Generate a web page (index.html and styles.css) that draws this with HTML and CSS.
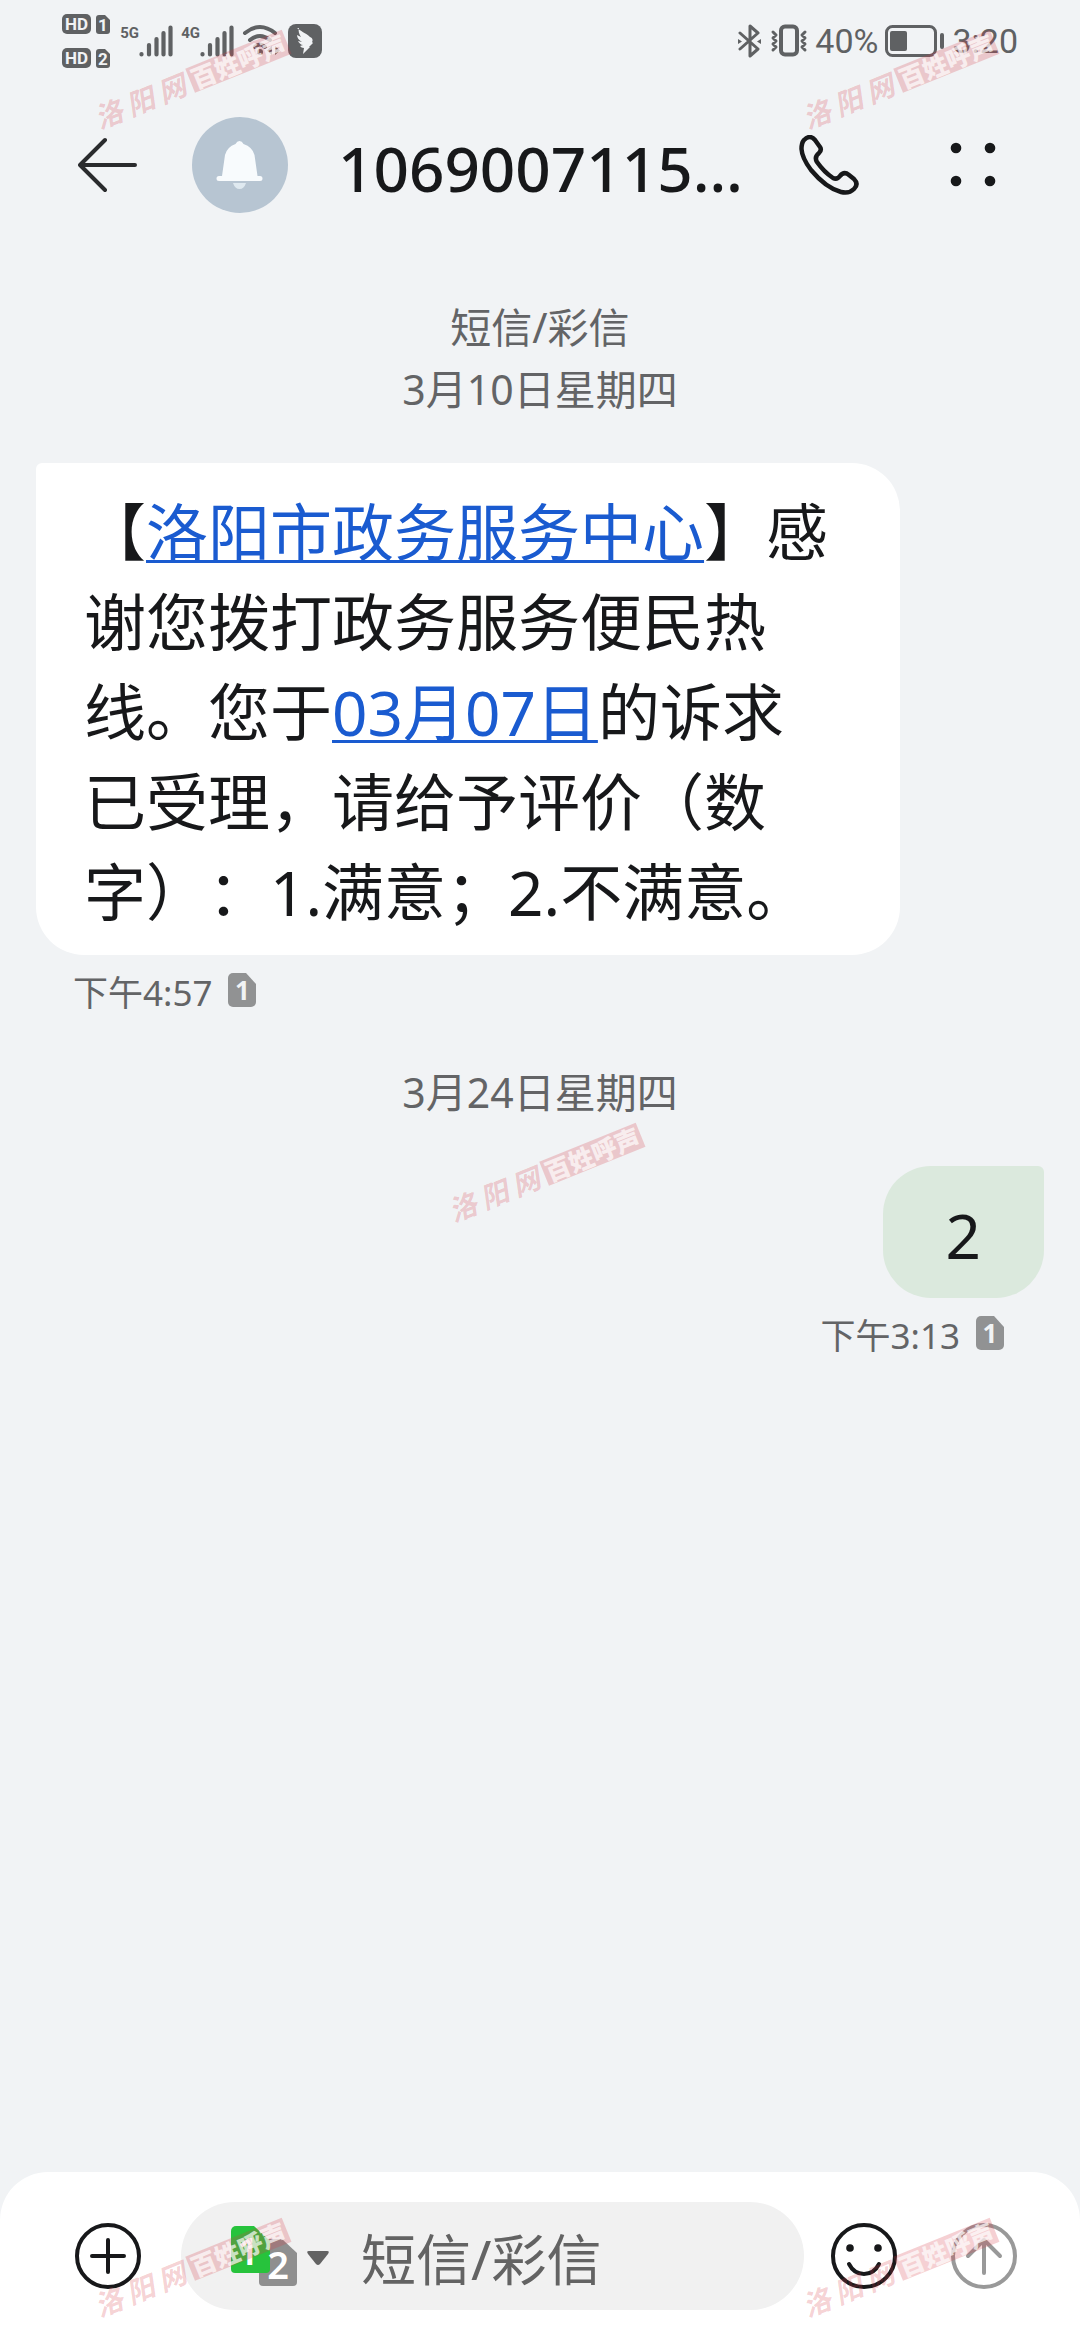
FILE: index.html
```html
<!DOCTYPE html>
<html lang="zh-CN">
<head>
<meta charset="utf-8">
<meta name="viewport" content="width=device-width, initial-scale=1">
<title>短信/彩信</title>
<link rel="stylesheet" href="styles.css">
</head>
<body>
<svg class="defs" aria-hidden="true">
  <symbol id="sim" viewBox="0 0 28 34">
    <path d="M5 0H18L28 11V29a5 5 0 0 1-5 5H5a5 5 0 0 1-5-5V5a5 5 0 0 1 5-5z"/>
  </symbol>
  <symbol id="bars" viewBox="0 0 34 32">
    <path d="M2.500 29v.5M10 20v9.500M17.500 14v15.500M24.500 8v21.500M31.500 2.500v27" fill="none" stroke="currentColor" stroke-width="4.200" stroke-linecap="round"/>
  </symbol>
</svg>

<div class="screen">
  <div class="status">
    <div class="status-left">
      <svg class="hd" viewBox="0 0 50 56" role="img" aria-label="HD 1 HD 2">
        <g fill="#5f6163">
          <rect x="0" y="1" width="29" height="20" rx="5"/>
          <rect x="0" y="35" width="29" height="20" rx="5"/>
          <path d="M37 2h6l5 5v11a3 3 0 0 1-3 3h-8a3 3 0 0 1-3-3V5a3 3 0 0 1 3-3z"/>
          <path d="M37 36h6l5 5v11a3 3 0 0 1-3 3h-8a3 3 0 0 1-3-3V39a3 3 0 0 1 3-3z"/>
        </g>
        <g class="hd-text">
          <text x="14.500" y="17">HD</text><text x="14.500" y="51">HD</text>
          <text x="41" y="18">1</text><text x="41" y="52">2</text>
        </g>
      </svg>
      <div class="signal"><span>5G</span><svg class="bars"><use href="#bars"/></svg></div>
      <div class="signal"><span>4G</span><svg class="bars"><use href="#bars"/></svg></div>
      <svg class="wifi" viewBox="0 0 38 34" fill="none" stroke="#5f6163" stroke-width="4" stroke-linecap="round">
        <path d="M3 9Q18 -3 33 9M8 16Q18 8 28 16M13 23Q18 18 23 23"/>
        <circle cx="18" cy="28" r="3" fill="#5f6163" stroke="none"/>
        <path d="M30 22v9l-5-4.500zM33 22v9l5-4.500z" fill="#5f6163" stroke="none"/>
      </svg>
      <svg class="bird" viewBox="0 0 34 34">
        <rect width="34" height="34" rx="8" fill="#5f6163"/>
        <path d="M9 4c3 3 9 5 13 9 3 1 3 4 2 5l1 1-4 4h1l-7 7 1-6c-2 0-3-1-4-2l3-1c-2 0-4-2-5-4l4 1c-3-2-5-4-5-7l4 2c-2-3-3-6-2-9z" fill="#f1f3f5"/>
      </svg>
    </div>
    <div class="status-right">
      <svg class="bt" viewBox="0 0 26 34" fill="none" stroke="#5f6163" stroke-width="3" stroke-linejoin="round" stroke-linecap="round">
        <path d="M3 9l18 16-8 7V2l8 7L3 25"/>
        <path d="M1 15v5l4-2.500zM24 15v5l-4-2.500z" fill="#5f6163" stroke="none"/>
      </svg>
      <svg class="vib" viewBox="0 0 38 34" fill="none" stroke="#5f6163" stroke-width="3" stroke-linecap="round" stroke-linejoin="round">
        <rect x="11" y="2.500" width="16" height="28" rx="4" stroke-width="4"/>
        <path d="M3 8l3 3-3 3 3 3-3 3 3 3-3 3M35 8l-3 3 3 3-3 3 3 3-3 3 3 3"/>
      </svg>
      <span class="status-text">40%</span>
      <svg class="battery" viewBox="0 0 60 34">
        <rect x="1.500" y="2.500" width="49" height="29" rx="6" fill="none" stroke="#5f6163" stroke-width="3"/>
        <rect x="5" y="7" width="17" height="20" rx="2" fill="#5f6163"/>
        <rect x="55" y="9" width="4" height="16" rx="2" fill="#5f6163"/>
      </svg>
      <span class="status-text">3:20</span>
    </div>
  </div>

  <header class="header">
    <button class="icon-button" aria-label="返回">
      <svg class="back" viewBox="0 0 60 60" fill="none" stroke="#2a2b2d" stroke-width="4" stroke-linecap="round" stroke-linejoin="round">
        <path d="M27 5L2 30H57M27 55L2 30"/>
      </svg>
    </button>
    <svg class="avatar" viewBox="0 0 96 96">
      <circle cx="48" cy="48" r="48" fill="#b7c5d2"/>
      <path d="M41 66h13q-2 6-6.500 6T41 66z" fill="#dfe9f0"/>
      <path d="M47.500 24q2.500 0 4 3 9 3 11 11l3 21h2.500a2.500 2.500 0 0 1 0 5h-41a2.500 2.500 0 0 1 0-5H30l3-21q2-8 10.500-11 1.500-3 4-3z" fill="#f8fbfd"/>
    </svg>
    <h1 class="title">1069007115…</h1>
    <button class="icon-button" aria-label="拨打电话">
      <svg class="phone" viewBox="0 0 60 60" fill="none" stroke="#17181a" stroke-width="4.500" stroke-linejoin="round">
        <path d="M5 5Q11 -1 16 5L21 12Q23 15 20 18 15 22 18 27 25 37 34 43 38 45 41 41 45 36 50 40L55 44Q60 49 55 54 50 59 42 57 27 53 12 35 3 23 2.500 14 2.500 8 5 5z"/>
      </svg>
    </button>
    <button class="icon-button" aria-label="更多">
      <svg class="more" viewBox="0 0 46 46" fill="#17181a">
        <circle cx="6" cy="6" r="5.300"/><circle cx="40" cy="6" r="5.300"/><circle cx="6" cy="39" r="5.300"/><circle cx="40" cy="39" r="5.300"/>
      </svg>
    </button>
  </header>

  <main class="thread">
    <p class="stamp">短信/彩信<br>3月10日星期四</p>
    <article class="message received">
      <p class="bubble">【<a href="#center">洛阳市政务服务中心</a>】感谢您拨打政务服务便民热线。您于<a href="#date">03月07日</a>的诉求已受理，请给予评价（数字）：1.满意；2.不满意。</p>
      <div class="meta"><time>下午4:57</time><span class="sim"><svg><use href="#sim"/></svg><b>1</b></span></div>
    </article>
    <p class="stamp">3月24日星期四</p>
    <article class="message sent">
      <p class="bubble">2</p>
      <div class="meta"><time>下午3:13</time><span class="sim"><svg><use href="#sim"/></svg><b>1</b></span></div>
    </article>
  </main>

  <form class="composer">
    <button type="button" class="icon-button" aria-label="添加">
      <svg class="round" viewBox="0 0 66 66" fill="none" stroke="#17181a" stroke-width="4" stroke-linecap="round">
        <circle cx="33" cy="33" r="31"/><path d="M33 17v32M17 33h32"/>
      </svg>
    </button>
    <div class="field">
      <button type="button" class="icon-button" aria-label="选择 SIM 卡">
        <svg class="dual" viewBox="0 0 98 60">
          <path d="M33 13h18l15 14v29a4 4 0 0 1-4 4H32a4 4 0 0 1-4-4V18z" fill="#8f8f8f"/>
          <path d="M5 0h18l16 15v28a4 4 0 0 1-4 4H4a4 4 0 0 1-4-4V5a5 5 0 0 1 5-5z" fill="#27c33c"/>
          <text class="dual-text" x="17" y="39">1</text>
          <text class="dual-text" x="47" y="53">2</text>
          <path d="M78 25h18q3 0 1 3l-8 10q-2 2-4 0l-8-10q-2-3 1-3z" fill="#636363"/>
        </svg>
      </button>
      <input class="input" type="text" aria-label="短信/彩信" placeholder="短信/彩信">
    </div>
    <button type="button" class="icon-button" aria-label="表情">
      <svg class="round" viewBox="0 0 66 66" fill="none" stroke="#17181a" stroke-width="4" stroke-linecap="round">
        <circle cx="33" cy="33" r="31"/><path d="M18 41q5 10 15 10t15-10"/>
        <g fill="#17181a" stroke="none"><circle cx="19" cy="25" r="3.800"/><circle cx="47" cy="25" r="3.800"/></g>
      </svg>
    </button>
    <button type="submit" class="icon-button" aria-label="发送">
      <svg class="round" viewBox="0 0 66 66" fill="none" stroke="#999" stroke-width="4" stroke-linecap="round" stroke-linejoin="round">
        <circle cx="33" cy="33" r="31"/><path d="M33 50V17M17 33l16-16 16 16"/>
      </svg>
    </button>
  </form>

  <div class="mark top left"><i>洛</i><i>阳</i><i>网</i><b>百姓呼声</b></div>
  <div class="mark top right"><i>洛</i><i>阳</i><i>网</i><b>百姓呼声</b></div>
  <div class="mark middle"><i>洛</i><i>阳</i><i>网</i><b>百姓呼声</b></div>
  <div class="mark bottom left"><i>洛</i><i>阳</i><i>网</i><b>百姓呼声</b></div>
  <div class="mark bottom right"><i>洛</i><i>阳</i><i>网</i><b>百姓呼声</b></div>
</div>
</body>
</html>
```

FILE: styles.css
```css
* {
  box-sizing: border-box;
  margin: 0;
}

body {
  background: #f1f3f5;
  color: #17181a;
  font-family: "Noto Sans", "Noto Sans CJK SC", sans-serif;
  text-spacing-trim: space-all;
}

svg {
  display: block;
  flex: none;
}

.defs {
  position: absolute;
  width: 0;
  height: 0;
}

.screen {
  position: relative;
  display: flex;
  flex-direction: column;
  min-height: 100vh;
  overflow: hidden;
}

.icon-button {
  display: flex;
  flex: none;
  padding: 0;
  border: 0;
  background: none;
  font: inherit;
}

/* Status bar */
.status {
  display: flex;
  justify-content: space-between;
  height: 84px;
  padding: 13px 62px 0;
  color: #5f6163;
  font-family: Roboto, sans-serif;
}

.status-left,
.status-right {
  display: flex;
  align-items: center;
  height: 56px;
}

.status-left {
  gap: 8px;
}

.status-right {
  gap: 7px;
}

.hd {
  width: 50px;
  height: 56px;
}

.hd-text {
  fill: #f1f3f5;
  font-size: 17px;
  font-weight: 700;
  text-anchor: middle;
}

.signal {
  display: flex;
  align-items: flex-start;
  width: 53px;
  height: 32px;
  justify-content: flex-end;
}

.signal span {
  font-size: 15px;
  line-height: 16px;
  font-weight: 700;
}

.bars {
  width: 34px;
  height: 32px;
}

.wifi {
  width: 38px;
  height: 34px;
}

.bird {
  width: 34px;
  height: 34px;
}

.bt {
  width: 26px;
  height: 34px;
}

.vib {
  width: 38px;
  height: 34px;
}

.battery {
  width: 60px;
  height: 34px;
}

.status-text {
  font-size: 34px;
  line-height: 40px;
}

/* Conversation header */
.header {
  display: flex;
  align-items: center;
  height: 162px;
  padding: 0 84px 0 78px;
}

.back {
  width: 60px;
  height: 60px;
}

.avatar {
  width: 96px;
  height: 96px;
  margin: 0 50px 0 54px;
}

.title {
  flex: 1;
  overflow: hidden;
  padding-top: 5px;
  font-size: 62px;
  line-height: 84px;
  font-weight: 500;
  white-space: nowrap;
}

.phone {
  width: 60px;
  height: 60px;
}

.more {
  width: 46px;
  height: 46px;
  margin-left: 91px;
}

/* Messages */
.thread {
  flex: 1;
  padding: 50px 36px;
}

.stamp {
  margin-bottom: 43px;
  color: #636466;
  font-size: 41px;
  line-height: 62px;
  text-align: center;
}

.message {
  display: flex;
  flex-direction: column;
  align-items: flex-start;
  margin-bottom: 34px;
}

.sent {
  align-items: flex-end;
}

.bubble {
  max-width: 864px;
  padding: 24px 60px 18px 48px;
  border-radius: 6px 48px 48px 48px;
  background: #fff;
  font-size: 62px;
  line-height: 90px;
}

.sent .bubble {
  padding: 24px 63px 18px;
  border-radius: 48px 6px 48px 48px;
  background: #dbe9dd;
}

.bubble a {
  color: #1a5bd0;
  text-decoration-thickness: 3px;
  text-underline-offset: 4px;
  text-decoration-skip-ink: none;
}

.meta {
  display: flex;
  align-items: center;
  gap: 16px;
  height: 70px;
  margin-bottom: 2px;
  padding: 0 40px 0 37px;
  color: #636466;
  font-size: 35px;
}

.sim {
  display: grid;
  width: 28px;
  height: 34px;
  color: #f1f3f5;
  font-size: 26px;
  line-height: 34px;
  text-align: center;
}

.sim svg,
.sim b {
  grid-area: 1 / 1;
  width: 28px;
  height: 34px;
}

.sim svg {
  fill: #919293;
}

/* Composer */
.composer {
  display: flex;
  align-items: center;
  padding: 30px 63px 30px 75px;
  border-radius: 48px 48px 0 0;
  background: #fff;
}

.round {
  width: 66px;
  height: 66px;
}

.field {
  display: flex;
  flex: 1;
  align-items: center;
  gap: 32px;
  min-width: 0;
  height: 108px;
  margin: 0 27px 0 40px;
  padding: 0 50px;
  border-radius: 54px;
  background: #f1f1f1;
}

.composer .field ~ .icon-button + .icon-button {
  margin-left: 54px;
}

.dual {
  width: 98px;
  height: 60px;
}

.dual-text {
  fill: #fff;
  font-size: 38px;
  font-weight: 600;
  text-anchor: middle;
}

.input {
  flex: 1;
  min-width: 0;
  height: 84px;
  padding: 4px 0 0;
  border: 0;
  outline: 0;
  background: none;
  color: #17181a;
  font: inherit;
  font-size: 55px;
}

.input::placeholder {
  color: #636363;
  opacity: 1;
}

/* Stamped site marks over the screen */
.mark {
  position: absolute;
  display: flex;
  align-items: center;
  gap: 6px;
  width: 208px;
  height: 30px;
  color: rgba(214, 60, 72, 0.24);
  font-size: 28px;
  line-height: 30px;
  font-weight: 700;
  transform: rotate(-22deg);
  pointer-events: none;
}

.mark b {
  height: 26px;
  padding: 0 2px;
  background: rgba(214, 60, 72, 0.24);
  color: rgba(255, 255, 255, 0.7);
  font-size: 25px;
  line-height: 26px;
}

.top {
  top: 65px;
}

.bottom {
  bottom: 57px;
}

.left {
  left: 88px;
}

.right {
  right: 76px;
}

.middle {
  top: 50%;
  left: 50%;
  margin: -12px 0 0 -98px;
}
```
